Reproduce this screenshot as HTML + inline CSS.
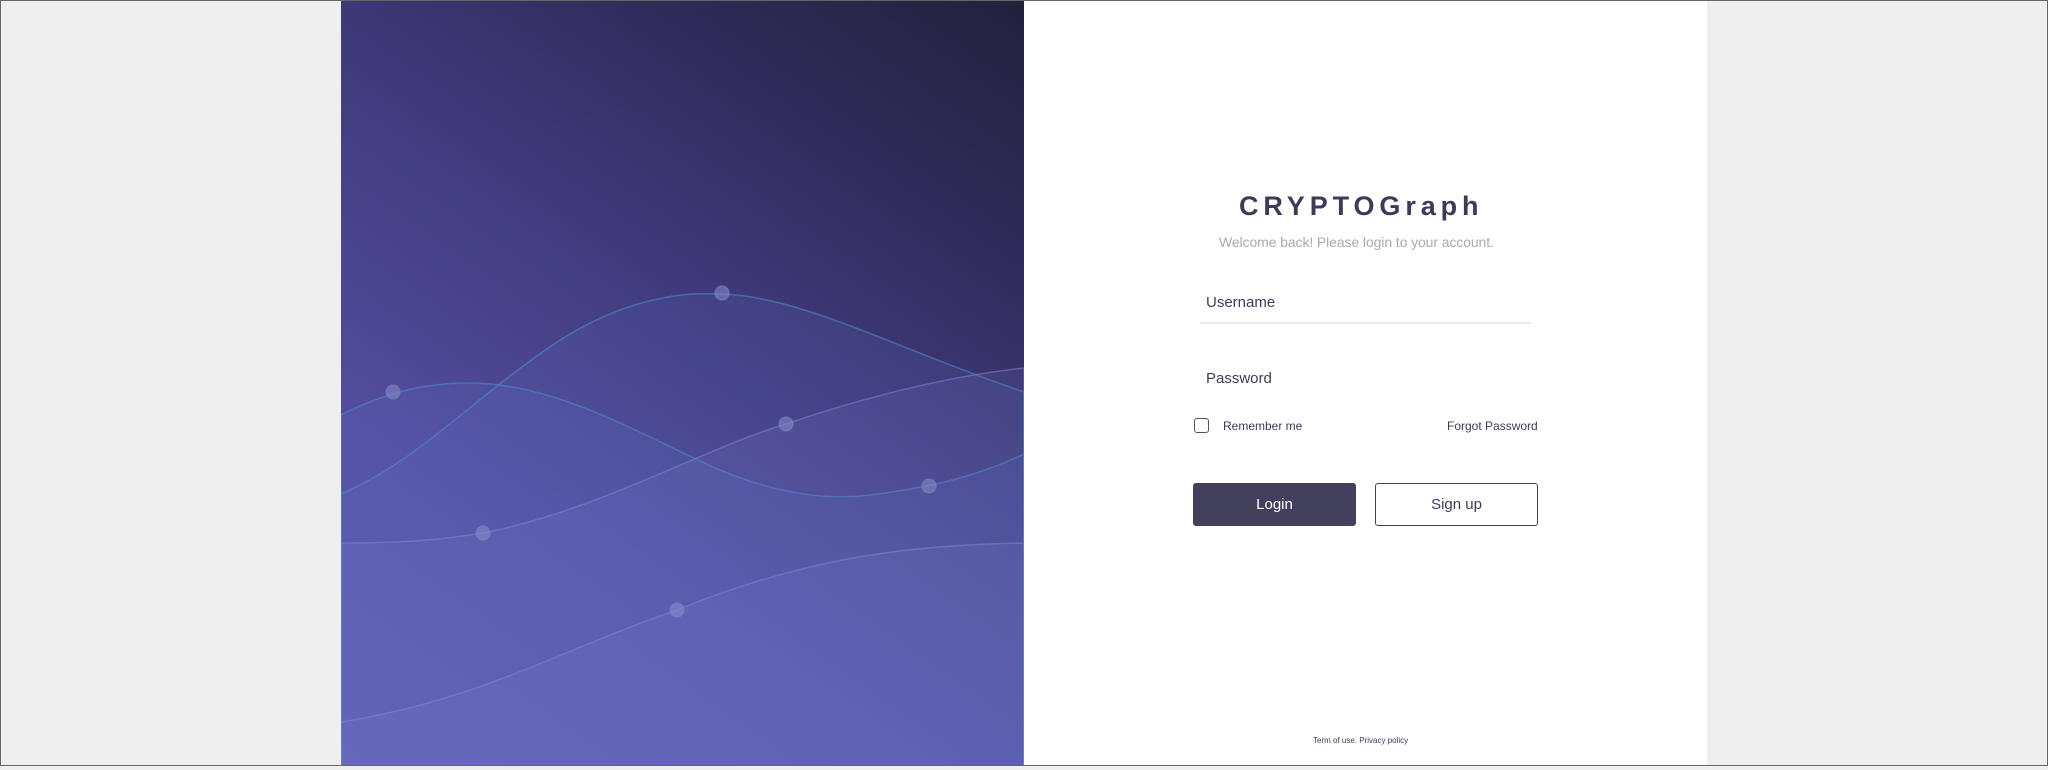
<!DOCTYPE html>
<html><head><meta charset="utf-8"><style>
html,body{margin:0;padding:0}
body{width:2048px;height:766px;background:#efefef;position:relative;overflow:hidden;font-family:"Liberation Sans",sans-serif}
.frame{position:absolute;left:0;top:0;width:2046px;height:764px;border:1px solid #666}
.left{position:absolute;left:341px;top:1px;width:683px;height:764px;background:linear-gradient(35deg,#5d56aa 0%,#534c9c 30%,#403a7c 58%,#2e2b58 80%,#22213c 100%)}
.right{position:absolute;left:1024px;top:1px;width:683px;height:764px;background:#fff}
.t{position:absolute;white-space:nowrap}
</style></head><body>
<div class="frame"></div>
<div class="left">
<svg width="683" height="764" viewBox="341 1 683 764">
<g stroke-width="1.5">
<path d="M341 722 C480 700 560 650 677 610 C800 560 900 545 1024 543 L1024 766 L341 766Z" fill="rgba(150,140,220,0.12)" stroke="rgba(150,140,230,0.45)"/>
<path d="M341 543 C400 543 440 540 483 533 C600 510 700 450 786 424 C880 392 960 375 1024 368 L1024 766 L341 766Z" fill="rgba(150,140,220,0.12)" stroke="rgba(150,140,230,0.45)"/>
<path d="M341 415 C390 390 430 383 470 383 C560 383 650 440 720 470 C780 495 830 500 870 495 C950 485 990 470 1024 454 L1024 766 L341 766Z" fill="rgba(100,130,210,0.14)" stroke="rgba(80,140,210,0.55)"/>
<path d="M341 494 C420 460 470 400 560 340 C640 290 700 293 722 294 C800 296 900 350 1024 392 L1024 766 L341 766Z" fill="rgba(100,130,210,0.12)" stroke="rgba(80,140,210,0.55)"/>
</g>
<g fill="rgba(140,140,200,0.55)" stroke="rgba(120,130,210,0.5)" stroke-width="1.5">
<circle cx="722" cy="293" r="7"/><circle cx="393" cy="392" r="7"/><circle cx="786" cy="424" r="7"/>
<circle cx="929" cy="486" r="7"/><circle cx="483" cy="533" r="7"/><circle cx="677" cy="610" r="7"/>
</g>
</svg>
</div>
<div class="right"></div>
<div class="t" style="left:1239px;top:191px;font-size:27px;font-weight:bold;letter-spacing:4.9px;color:#3d3b5a">CRYPTOGraph</div>
<div class="t" style="left:1219px;top:234px;font-size:14px;letter-spacing:-0.1px;color:#aaa">Welcome back! Please login to your account.</div>
<div class="t" style="left:1206px;top:294px;font-size:15px;color:#3d3b5a">Username</div>
<div style="position:absolute;left:1200px;top:322px;width:331px;height:2px;background:#e8e8f0"></div>
<div class="t" style="left:1206px;top:370px;font-size:15px;color:#3d3b5a">Password</div>
<div style="position:absolute;left:1194px;top:418px;width:13px;height:13px;border:1px solid #555;border-radius:3px"></div>
<div class="t" style="left:1223px;top:419px;font-size:12px;color:#3d3b5a">Remember me</div>
<div class="t" style="left:1447px;top:419px;font-size:12px;color:#3d3b5a">Forgot Password</div>
<div style="position:absolute;left:1193px;top:483px;width:163px;height:43px;background:#43405e;border-radius:3px;color:#fff;font-size:15px;line-height:43px;text-align:center">Login</div>
<div style="position:absolute;left:1375px;top:483px;width:161px;height:41px;border:1px solid #43405e;border-radius:3px;color:#3d3b5a;font-size:15px;line-height:41px;text-align:center">Sign up</div>
<div class="t" style="left:1313px;top:736px;font-size:8px;color:#3d3b5a">Term of use. Privacy policy</div>
</body></html>
